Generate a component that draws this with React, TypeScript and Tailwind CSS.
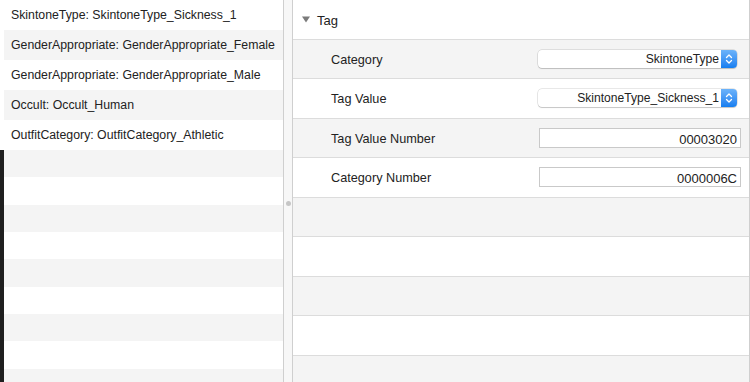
import React from "react";

type Row = { label: string; kind: "popup" | "field"; value: string };

const listItems = [
  "SkintoneType: SkintoneType_Sickness_1",
  "GenderAppropriate: GenderAppropriate_Female",
  "GenderAppropriate: GenderAppropriate_Male",
  "Occult: Occult_Human",
  "OutfitCategory: OutfitCategory_Athletic",
];

const rows: Row[] = [
  { label: "Category", kind: "popup", value: "SkintoneType" },
  { label: "Tag Value", kind: "popup", value: "SkintoneType_Sickness_1" },
  { label: "Tag Value Number", kind: "field", value: "00003020" },
  { label: "Category Number", kind: "field", value: "0000006C" },
];

const Stepper = () => (
  <span className="flex h-full w-[16px] items-center justify-center rounded-r-[4px] bg-gradient-to-b from-[#6cb3fa] to-[#137ef0]">
    <svg width="8" height="12" viewBox="0 0 8 12" fill="none">
      <path d="M1.5 4.5 L4 2 L6.5 4.5" stroke="white" strokeWidth="1.3" strokeLinecap="round" strokeLinejoin="round" />
      <path d="M1.5 7.5 L4 10 L6.5 7.5" stroke="white" strokeWidth="1.3" strokeLinecap="round" strokeLinejoin="round" />
    </svg>
  </span>
);

const Popup = ({ value }: { value: string }) => (
  <div className="mr-[12px] flex h-[18px] w-[199px] items-center rounded-[4px] bg-white shadow-[0_0_0_0.5px_rgba(0,0,0,0.18),0_1px_1px_rgba(0,0,0,0.15)]">
    <span className="flex-1 overflow-hidden whitespace-nowrap pr-[2px] text-right text-[12.1px] leading-[18px]">
      {value}
    </span>
    <Stepper />
  </div>
);

const Field = ({ value }: { value: string }) => (
  <div className="mr-[8px] h-[20px] w-[202px] border border-[#c9c9c9] bg-white pr-[3px] pt-[1px] text-right leading-[19px]">
    {value}
  </div>
);

export default function App() {
  const emptyLeft = Array.from({ length: 9 });
  const emptyRight = Array.from({ length: 5 });

  return (
    <div className="flex h-[382px] w-[750px] overflow-hidden bg-white font-['Liberation_Sans',Arial,sans-serif] text-[13px] text-[#222222]">
      {/* sliver of the window behind */}
      <div className="flex w-[4px] shrink-0 flex-col">
        <div className="h-[150px] shrink-0 bg-white" />
        <div className="flex-1 bg-[#1f1f1f]" />
      </div>

      {/* tag list */}
      <div className="flex w-[280px] shrink-0 flex-col overflow-hidden border-r border-[#cfcfcf]">
        {listItems.map((item, i) => (
          <div
            key={item}
            className={
              "flex h-[30px] shrink-0 items-center overflow-hidden whitespace-nowrap pl-[7px] text-[12.3px] " +
              (i % 2 === 1 ? "bg-[#f4f4f4]" : "bg-white")
            }
          >
            {item}
          </div>
        ))}
        {emptyLeft.map((_, i) => (
          <div
            key={i}
            className={"h-[27.33px] shrink-0 " + (i % 2 === 0 ? "bg-[#f4f4f4]" : "bg-white")}
          />
        ))}
      </div>

      {/* split view divider */}
      <div className="flex w-[8px] shrink-0 justify-center bg-[#f7f7f7] pt-[201px]">
        <span className="h-[5px] w-[5px] rounded-full bg-[#c6c6c6]" />
      </div>

      {/* inspector */}
      <div className="flex flex-1 flex-col overflow-hidden border-x border-[#cfcfcf]">
        <div className="flex h-[39.5px] shrink-0 items-center gap-[7px] border-b border-[#dcdcdc] bg-white pl-[9px]">
          <svg width="8" height="7" viewBox="0 0 8 7" className="mt-[1px]">
            <path d="M0 0.5 H8 L4 6.5 Z" fill="#7b7b7b" />
          </svg>
          <span className="pt-[2px]">Tag</span>
        </div>
        {rows.map((row, i) => (
          <div
            key={row.label}
            className={
              "flex h-[39.5px] shrink-0 items-center justify-between border-b border-[#dcdcdc] pl-[38px] " +
              (i % 2 === 0 ? "bg-[#f4f4f4]" : "bg-white")
            }
          >
            <span className="pt-[3px] text-[12.7px]">{row.label}</span>
            {row.kind === "popup" ? <Popup value={row.value} /> : <Field value={row.value} />}
          </div>
        ))}
        {emptyRight.map((_, i) => (
          <div
            key={i}
            className={
              "h-[39.5px] shrink-0 border-b border-[#dcdcdc] " +
              (i % 2 === 0 ? "bg-[#f4f4f4]" : "bg-white")
            }
          />
        ))}
      </div>
    </div>
  );
}
